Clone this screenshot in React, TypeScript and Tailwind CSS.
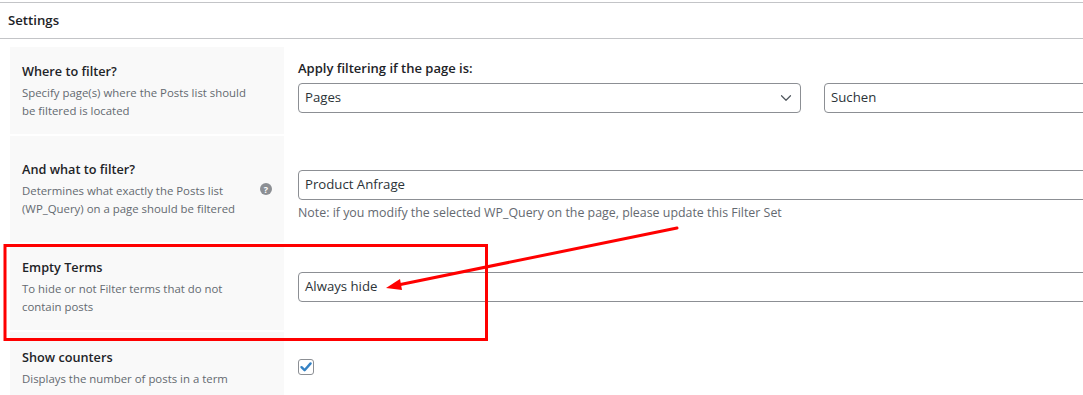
import { ChevronDown } from 'lucide-react'

const font = { fontFamily: '"Open Sans", "Noto Sans", sans-serif' }

const Label = ({ title, lines }: { title: string; lines: string[] }) => (
  <div className="flex flex-col">
    <div className="text-[12.7px] leading-[18px] font-semibold text-[#1d2327]">{title}</div>
    <div className="mt-[4px] text-[11.4px] leading-[18px] text-[#646970]">
      {lines.map((l) => (
        <div key={l} className="whitespace-nowrap">{l}</div>
      ))}
    </div>
  </div>
)

const Field = ({ value, className = '' }: { value: string; className?: string }) => (
  <div
    className={`h-[30px] border border-[#8c8f94] rounded-[4px] bg-white flex items-center px-[6px] text-[13.2px] text-[#2c3338] ${className}`}
  >
    {value}
  </div>
)

export default function App() {
  return (
    <div className="relative w-[1083px] h-[395px] overflow-hidden bg-white" style={font}>
      <div className="mt-[2px] h-[37px] border-t border-b border-[#c3c4c7] flex items-center px-[8px]">
        <span className="text-[13.2px] font-semibold text-[#1d2327]">Settings</span>
      </div>

      <div className="mt-[8px] flex flex-col gap-[2px]">
        {/* Where to filter */}
        <div className="flex h-[87px]">
          <div className="w-[274px] shrink-0 ml-[10px] bg-[#f9f9f9] px-[12px] flex items-center">
            <Label title="Where to filter?" lines={['Specify page(s) where the Posts list should', 'be filtered is located']} />
          </div>
          <div className="pl-[14px] pt-[12px] flex flex-col gap-[6px]">
            <div className="text-[13px] leading-[18px] font-semibold text-[#1d2327]">Apply filtering if the page is:</div>
            <div className="flex gap-[23px]">
              <div className="w-[503px] shrink-0 h-[30px] border border-[#8c8f94] rounded-[4px] bg-white flex items-center justify-between pl-[6px] pr-[5px] text-[13.2px] text-[#2c3338]">
                <span>Pages</span>
                <ChevronDown size={18} strokeWidth={1.6} className="text-[#50575e]" />
              </div>
              <Field value="Suchen" className="w-[280px] shrink-0" />
            </div>
          </div>
        </div>

        {/* And what to filter */}
        <div className="flex h-[106px]">
          <div className="w-[274px] shrink-0 ml-[10px] bg-[#f9f9f9] px-[12px] flex items-center justify-between">
            <Label title="And what to filter?" lines={['Determines what exactly the Posts list', '(WP_Query) on a page should be filtered']} />
            <span className="w-[12px] h-[12px] rounded-full bg-[#8c8f94] text-white text-[9px] font-bold flex items-center justify-center leading-none">?</span>
          </div>
          <div className="pl-[14px] pt-[34px] flex flex-col gap-[4px]">
            <Field value="Product Anfrage" className="w-[800px] shrink-0" />
            <div className="text-[12.4px] leading-[18px] text-[#646970] whitespace-nowrap">
              Note: if you modify the selected WP_Query on the page, please update this Filter Set
            </div>
          </div>
        </div>

        {/* Empty terms */}
        <div className="flex h-[86px]">
          <div className="w-[274px] shrink-0 ml-[10px] bg-[#f9f9f9] px-[12px] flex items-center">
            <Label title="Empty Terms" lines={['To hide or not Filter terms that do not', 'contain posts']} />
          </div>
          <div className="pl-[14px] pt-[28px]">
            <Field value="Always hide" className="w-[800px] shrink-0" />
          </div>
        </div>

        {/* Show counters */}
        <div className="flex h-[70px]">
          <div className="w-[274px] shrink-0 ml-[10px] bg-[#f9f9f9] px-[12px] pt-[16px]">
            <Label title="Show counters" lines={['Displays the number of posts in a term']} />
          </div>
          <div className="pl-[14px] pt-[27px]">
            <div className="w-[16px] h-[16px] border border-[#8c8f94] rounded-[3px] bg-white flex items-center justify-center">
              <svg width="14" height="14" viewBox="0 0 14 14">
                <path d="M2.5 7.2 L5.6 10.2 L11.6 3.4" fill="none" stroke="#3582c4" strokeWidth="2.4" strokeLinecap="round" strokeLinejoin="round" />
              </svg>
            </div>
          </div>
        </div>
      </div>

      {/* annotation overlay */}
      <svg className="absolute inset-0 pointer-events-none" width="1083" height="395">
        <rect x="5" y="245.5" width="481.5" height="94" fill="none" stroke="#ff0000" strokeWidth="3" />
        <line x1="677" y1="228" x2="398" y2="285" stroke="#ff0000" strokeWidth="3" strokeLinecap="round" />
        <polygon points="386,288 400,279 402,290" fill="#ff0000" />
      </svg>
    </div>
  )
}
